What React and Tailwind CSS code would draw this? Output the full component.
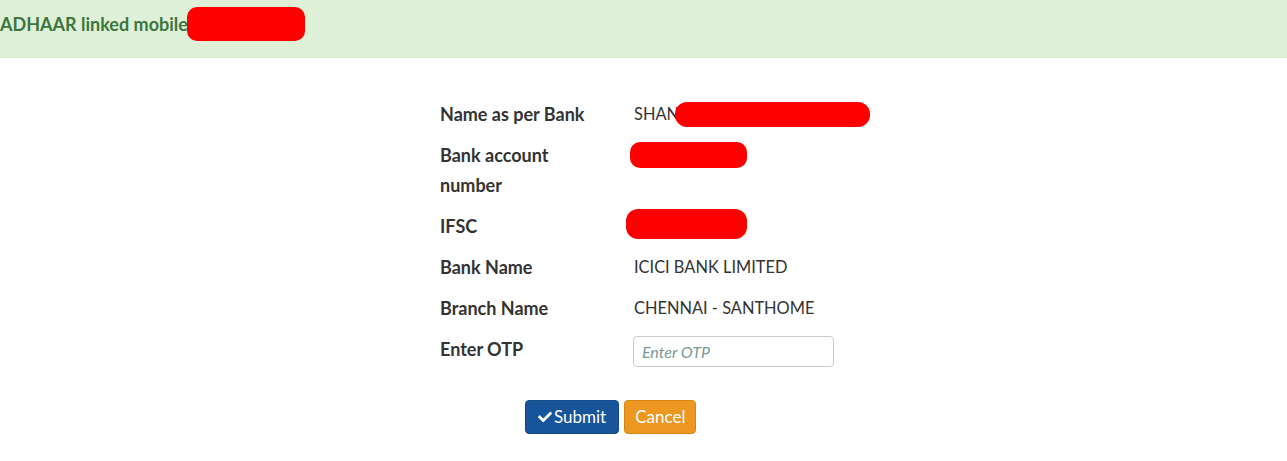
import React from "react";
import { FaCheck } from "react-icons/fa";

const rows = [
  { label: "Name as per Bank", value: <span className="flex items-center"><span>SHAN</span><span className="ml-[-4px] inline-block h-[25px] w-[195px] rounded-[12px] bg-[#ff0000]" /></span> },
  { label: "Bank account number", value: <span className="ml-[-4px] mt-[2px] inline-block h-[26px] w-[117px] rounded-[10px] bg-[#ff0000]" /> },
  { label: "IFSC", value: <span className="ml-[-8px] mt-[-2px] inline-block h-[30px] w-[121px] rounded-[12px] bg-[#ff0000]" /> },
  { label: "Bank Name", value: "ICICI BANK LIMITED" },
  { label: "Branch Name", value: "CHENNAI - SANTHOME" },
];

export default function App() {
  return (
    <div className="min-h-[461px] bg-white text-[#333] font-['Lato',sans-serif]">
      <div className="flex h-[58px] items-start border-b border-[#d6e9c6] bg-[#dff0d8] pt-[7px]">
        <span className="text-[18px] font-bold leading-[34px] text-[#3c763d]">ADHAAR linked mobile</span>
        <span className="ml-[-1px] inline-block h-[34px] w-[118px] rounded-[10px] bg-[#ff0000]" />
      </div>
      <div className="flex justify-center pt-[36px]">
        <div className="ml-[-7px] w-[400px]">
          {rows.map((r) => (
            <div key={r.label} className="flex pt-[5px] pb-[6px] leading-[30px]">
              <div className="w-[194px] shrink-0 pr-[34px] text-[18px] font-bold">{r.label}</div>
              <div className="flex items-start text-[16.4px]">{r.value}</div>
            </div>
          ))}
          <div className="flex pt-[5px] pb-[6px] leading-[30px]">
            <div className="w-[193px] shrink-0 text-[18px] font-bold">Enter OTP</div>
            <input
              placeholder="Enter OTP"
              className="mt-[2px] h-[31px] w-[201px] rounded-[4px] border border-[#ccc] px-[8px] text-[16px] italic placeholder:text-[#7a9a9a] outline-none"
            />
          </div>
          <div className="mt-[27px] flex gap-[5px] pl-[85px]">
            <button className="flex h-[34px] items-center rounded-[4px] border border-[#124a88] bg-[#175499] px-[12px] text-[17px] text-white">
              <FaCheck className="mr-[2px] h-[14px] w-[14px]" />Submit
            </button>
            <button className="flex h-[34px] items-center rounded-[4px] border border-[#d58512] bg-[#ec971f] px-[10px] text-[17px] text-white">
              Cancel
            </button>
          </div>
        </div>
      </div>
    </div>
  );
}
